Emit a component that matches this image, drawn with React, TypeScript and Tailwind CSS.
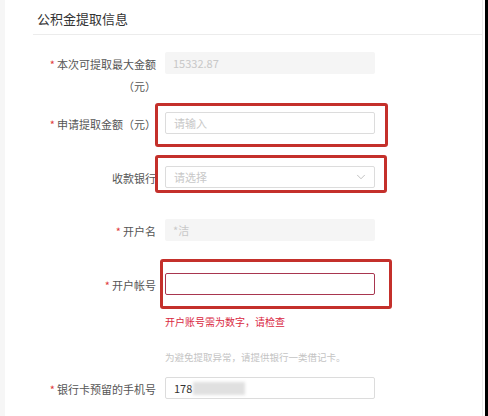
import { ChevronDown } from 'lucide-react'

const font = { fontFamily: '"Noto Sans CJK SC", "Noto Sans", sans-serif' }

function Label({ text, required, wrap }: { text: string; required?: boolean; wrap?: string }) {
  return (
    <div className="w-[110px] shrink-0 pt-[1px] text-right text-[11px] leading-[22px] text-[#555]">
      {required && <span className="mr-[2px] text-[#e0393e]">*</span>}
      {text}
      {wrap && <br />}
      {wrap}
    </div>
  )
}

function Row({ children, className }: { children: React.ReactNode; className?: string }) {
  return <div className={`flex items-start gap-[9px] pl-[41px] ${className ?? ''}`}>{children}</div>
}

// red annotation frames drawn over the screenshot
function Mark({ className }: { className: string }) {
  return <div className={`pointer-events-none absolute rounded-[3px] border-[3px] border-[#c4302b] ${className}`} />
}

export default function App() {
  return (
    <div className="relative flex h-[416px] w-[488px] overflow-hidden bg-white" style={font}>
      <div className="w-[5px] shrink-0 bg-[#f6f6f6]" />

      <div className="flex-1 border-r border-[#ebebeb]">
        <div className="ml-[28px] h-[35px] border-b border-[#ececec] pl-[4px] pt-[9px] text-[13px] leading-[20px] text-[#333]">
          公积金提取信息
        </div>

        <Row className="mt-[17px]">
          <Label required text="本次可提取最大金额" wrap="（元）" />
          <div className="flex h-[22px] w-[210px] items-center rounded-[2px] bg-[#f5f5f5] pl-[8px] text-[11px] text-[#c8c8c8]">
            15332.87
          </div>
        </Row>

        <Row className="mt-[15px]">
          <Label required text="申请提取金额（元）" />
          <div className="flex h-[22px] w-[210px] items-center rounded-[2px] border border-[#dcdcdc] pl-[8px] text-[11px] text-[#c8c8c8]">
            请输入
          </div>
        </Row>

        <Row className="mt-[31px]">
          <Label text="收款银行" />
          <div className="flex h-[22px] w-[210px] items-center justify-between rounded-[2px] border border-[#dcdcdc] pl-[8px] pr-[6px] text-[11px] text-[#c8c8c8]">
            <span>请选择</span>
            <ChevronDown size={14} strokeWidth={1.2} className="text-[#a8a8a8]" />
          </div>
        </Row>

        <Row className="mt-[30px]">
          <Label required text="开户名" />
          <div className="flex h-[22px] w-[210px] items-center rounded-[2px] bg-[#f5f5f5] pl-[8px] text-[11px] text-[#c8c8c8]">
            *洁
          </div>
        </Row>

        <Row className="mt-[31px]">
          <Label required text="开户帐号" />
          <div className="h-[22px] w-[210px] rounded-[2px] border border-[#a8364f]" />
        </Row>

        <div className="ml-[160px] mt-[19px] text-[10px] leading-[14px] text-[#d9283f]">开户账号需为数字，请检查</div>

        <div className="ml-[160px] mt-[21px] text-[9.5px] leading-[14px] text-[#c4c4c4]">
          为避免提取异常，请提供银行一类借记卡。
        </div>

        <Row className="mt-[13px]">
          <Label required text="银行卡预留的手机号" />
          <div className="flex h-[22px] w-[210px] items-center rounded-[2px] border border-[#dcdcdc] pl-[8px] text-[11px] text-[#333]">
            <span>178</span>
            <span className="ml-[1px] inline-block h-[13px] w-[52px] bg-[#e0e0e0] blur-[1.5px]" />
          </div>
        </Row>
      </div>

      <div className="w-[2px] shrink-0 bg-white" />
      <div className="w-[3px] shrink-0 bg-black" />

      <Mark className="left-[155px] top-[103px] h-[44px] w-[233px]" />
      <Mark className="left-[155px] top-[155px] h-[38px] w-[232px]" />
      <Mark className="left-[160px] top-[259px] h-[50px] w-[232px]" />
    </div>
  )
}
